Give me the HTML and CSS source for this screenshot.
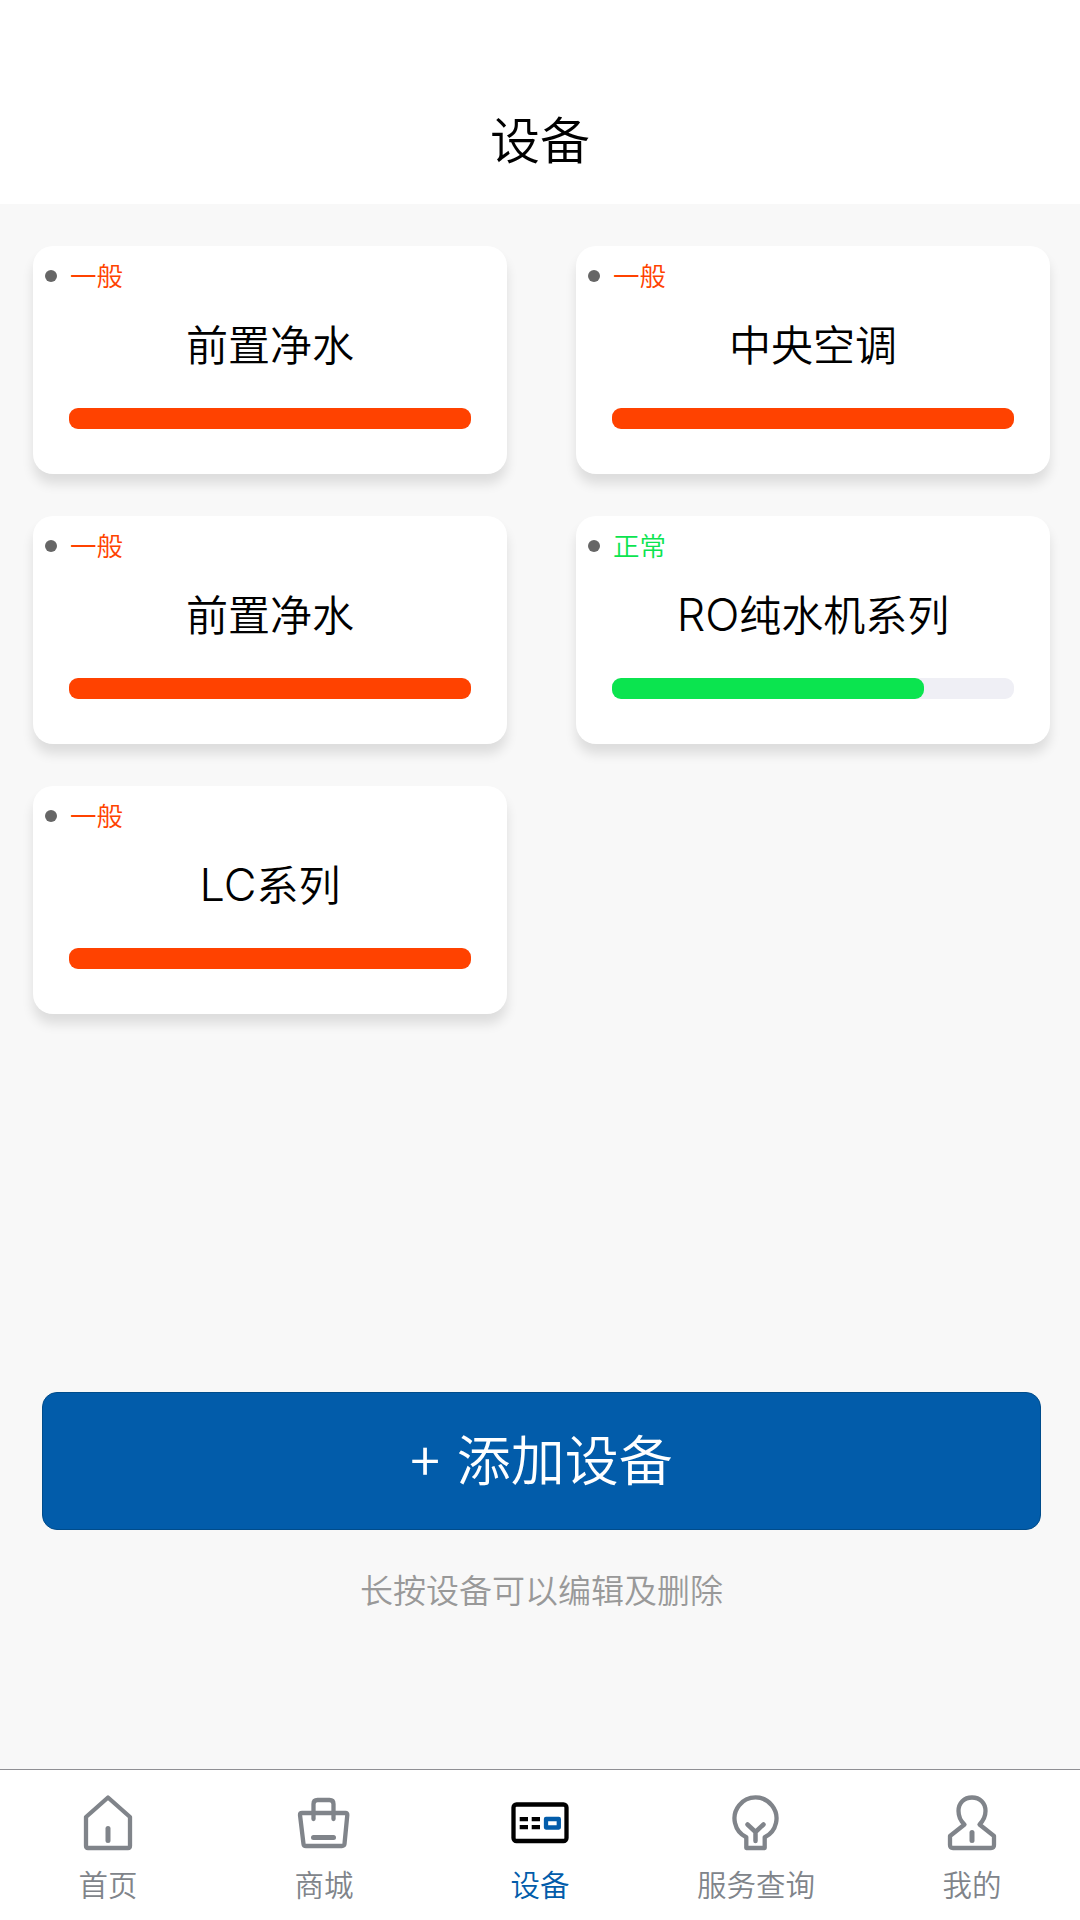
FILE: index.html
```html
<!DOCTYPE html>
<html lang="zh-CN">

<head>
    <meta charset="utf-8">
    <title>设备</title>
    <link rel="stylesheet" href="styles.css">
</head>

<body>
    <header class="header">
        <h1>设备</h1>
    </header>
    <main class="content">
        <div class="device-list">
            <div class="device">
                <div class="status warn"><i class="dot"></i>一般</div>
                <div class="name">前置净水</div>
                <div class="progress"><div class="bar warn-bar" style="width: 100%"></div></div>
            </div>
            <div class="device">
                <div class="status warn"><i class="dot"></i>一般</div>
                <div class="name">中央空调</div>
                <div class="progress"><div class="bar warn-bar" style="width: 100%"></div></div>
            </div>
            <div class="device">
                <div class="status warn"><i class="dot"></i>一般</div>
                <div class="name">前置净水</div>
                <div class="progress"><div class="bar warn-bar" style="width: 100%"></div></div>
            </div>
            <div class="device">
                <div class="status ok"><i class="dot"></i>正常</div>
                <div class="name"><span class="latin">RO</span>纯水机系列</div>
                <div class="progress"><div class="bar ok-bar" style="width: 77.6%"></div></div>
            </div>
            <div class="device">
                <div class="status warn"><i class="dot"></i>一般</div>
                <div class="name"><span class="latin">LC</span>系列</div>
                <div class="progress"><div class="bar warn-bar" style="width: 100%"></div></div>
            </div>
        </div>
        <button class="add"><span class="plus">+</span>添加设备</button>
        <p class="hint">长按设备可以编辑及删除</p>
    </main>
    <nav class="tabs">
        <a class="tab">
            <svg width="72" height="72" viewBox="0 0 72 72">
                <path d="M36 13.5 L58 33 V62 Q58 64 56 64 H16 Q14 64 14 62 V33 Z" />
                <path class="thick" d="M36 44.5 V56.5" />
            </svg>
            <span>首页</span>
        </a>
        <a class="tab">
            <svg width="72" height="72" viewBox="0 0 72 72">
                <path d="M14 29 H57.5 Q59.5 29 59.3 31 L56.5 60 Q56.2 62 54 62 H18 Q15.7 62 15.5 60 L12 31 Q12 29 14 29 Z" />
                <path d="M25.5 35 V20 Q25.5 16 29.5 16 H41.5 Q45.5 16 45.5 20 V35" />
                <path class="thick" d="M25.5 53.5 H45.5" />
            </svg>
            <span>商城</span>
        </a>
        <a class="tab active">
            <svg width="72" height="72" viewBox="0 0 72 72">
                <rect class="frame" x="9.5" y="20.5" width="53" height="36.5" rx="3" />
                <path class="dash" d="M15.7 35.2 H24 M27.7 35.2 H36 M15.7 43.2 H24 M27.7 43.2 H36" />
                <rect class="screen" x="42" y="35" width="12.8" height="8.5" />
            </svg>
            <span>设备</span>
        </a>
        <a class="tab">
            <svg width="72" height="72" viewBox="0 0 72 72">
                <path d="M26.3 64 V53.3 A21 21 0 1 1 44.7 53.3 V64 Z" />
                <path class="mid" d="M27.5 40.5 L35.5 48 L43.5 40.5 M35.5 48 V57" />
            </svg>
            <span>服务查询</span>
        </a>
        <a class="tab">
            <svg width="72" height="72" viewBox="0 0 72 72">
                <path d="M28.5 40.5 C24 36.5 22.5 32 22.5 27 C22.5 19 28 13.5 36 13.5 C44 13.5 49.5 19 49.5 27 C49.5 32 47.5 36.5 43.5 40.5 L58 52 V61 Q58 64 55 64 H17 Q14 64 14 61 V52 Z" />
                <path class="thick" d="M36 48.5 V56.5" />
            </svg>
            <span>我的</span>
        </a>
    </nav>
</body>

</html>
```
FILE: styles.css
```css
* {
    box-sizing: border-box;
}

body {
    margin: 0;
    height: 1920px;
    display: flex;
    flex-direction: column;
    overflow: hidden;
    background-color: #f8f8f8;
    color: #000;
    font-family: "Noto Sans CJK SC", sans-serif;
    font-weight: 350;
}

.header {
    height: 204px;
    padding-top: 74px;
    background-color: #fff;
    text-align: center;
}

.header h1 {
    margin: 0;
    font-size: 50px;
    font-weight: 350;
    line-height: 126px;
}

.content {
    flex: 1;
    padding: 42px 30px 0 33px;
}

.device-list {
    display: grid;
    grid-template-columns: 474px 474px;
    grid-auto-rows: 228px;
    gap: 42px 69px;
    height: 1146px;
    align-content: start;
}

.device {
    padding-top: 13px;
    border-radius: 20px;
    background-color: #fff;
    box-shadow: 0 10px 12px rgba(0, 0, 0, 0.11);
}

.status {
    display: flex;
    align-items: center;
    height: 32px;
    padding-left: 12px;
    font-size: 26.5px;
    line-height: 30px;
}

.dot {
    width: 12px;
    height: 12px;
    margin: 2px 13px 0 0;
    border-radius: 50%;
    background-color: #666;
}

.warn {
    color: #ff4200;
}

.ok {
    color: #0be44f;
}

.name {
    height: 62px;
    margin-top: 21px;
    font-size: 42px;
    line-height: 62px;
    text-align: center;
}

.latin {
    font-family: Inter, "Noto Sans CJK SC", sans-serif;
    font-size: 45px;
    font-weight: 300;
    line-height: 1;
}

.progress {
    height: 21px;
    margin: 34px 36px 0;
    border-radius: 9px;
    background-color: #efeff5;
}

.bar {
    height: 21px;
    border-radius: 9px;
}

.warn-bar {
    background-color: #ff4200;
}

.ok-bar {
    background-color: #0be44f;
}

.add {
    display: block;
    width: 999px;
    height: 138px;
    margin: 0 0 0 9px;
    padding: 0 0 6px;
    border: 1px solid #004c8b;
    border-radius: 15px;
    background-color: #025caa;
    color: #fff;
    font-family: inherit;
    font-size: 54px;
    font-weight: 350;
    line-height: 130px;
}

.plus {
    margin-right: 17px;
}

.hint {
    margin: 34px 0 0;
    color: #999;
    font-size: 33px;
    line-height: 50px;
    text-align: center;
}

.tabs {
    display: flex;
    height: 151px;
    border-top: 1px solid #8f8f94;
    background-color: #fff;
}

.tab {
    flex: 1;
    display: flex;
    flex-direction: column;
    align-items: center;
    padding-top: 14px;
    color: #80848a;
    font-size: 29.5px;
    line-height: 55px;
}

.tab svg {
    display: block;
    fill: none;
    stroke: #80848a;
    stroke-width: 4.3;
    stroke-linejoin: round;
    stroke-linecap: round;
}

.tab .thick {
    stroke-width: 5;
}

.tab .mid {
    stroke-width: 4.5;
}

.active {
    color: #025caa;
}

.tab .frame {
    stroke: #000;
}

.tab .dash {
    stroke: #000;
    stroke-linecap: butt;
}

.tab .screen {
    stroke: #025caa;
}
```
